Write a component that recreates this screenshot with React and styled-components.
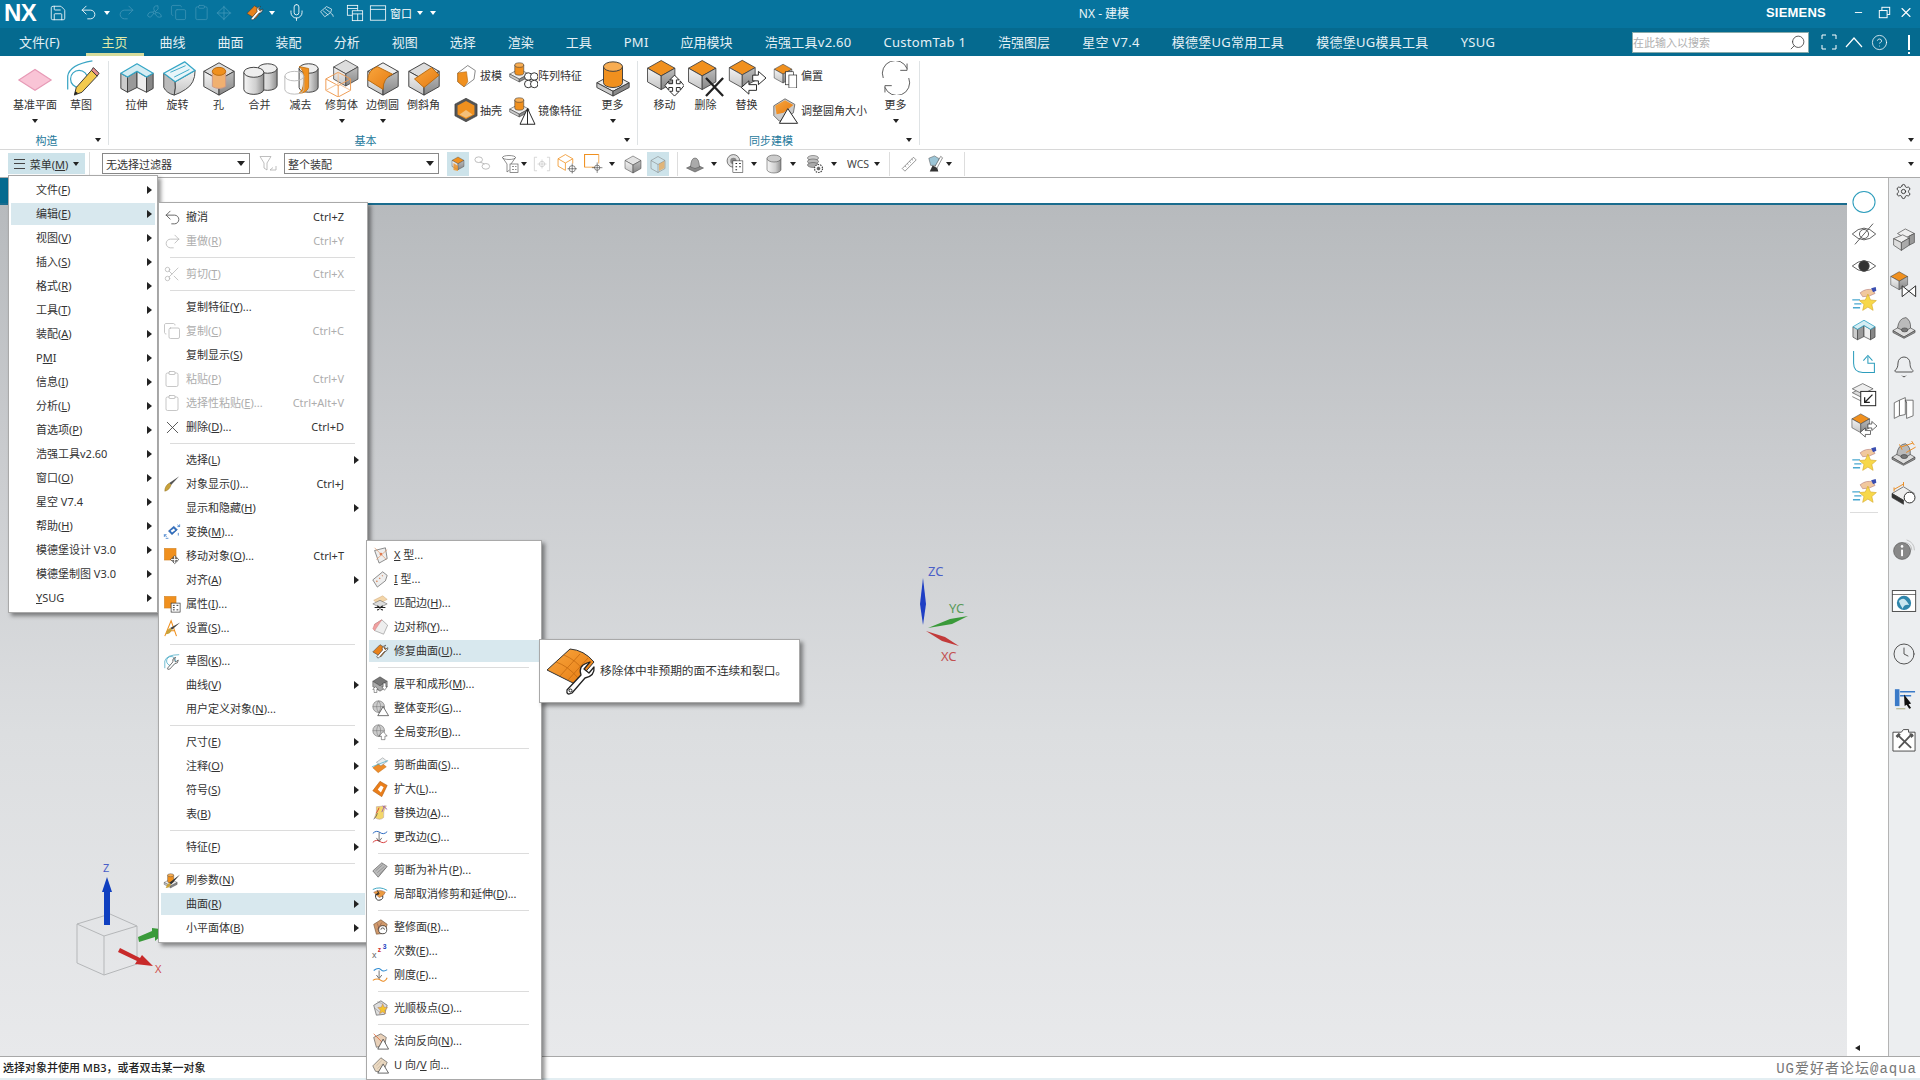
import React from "react";
import styled, { createGlobalStyle } from "styled-components";
import { Save, Undo2, Redo2, Mic, Search, CircleHelp, Scissors, Copy, Clipboard, X, Bell, Settings, Clock, Minus } from "lucide-react";

const Global = createGlobalStyle`
  html, body { margin: 0; padding: 0; background: #fff; }
  body { font-family: "Noto Sans", "Noto Sans CJK SC", sans-serif; font-size: 11px; color: #333; }
  * { box-sizing: border-box; }
`;

/* ---------- page frame ---------- */
const Page = styled.div`position: relative; width: 1920px; height: 1080px; overflow: hidden; display: flex; flex-direction: column; background: #fff;`;
const TitleBar = styled.div`height: 28px; flex: none; background: #06749e; color: #fff; display: flex; align-items: center; position: relative; padding-bottom: 3px;`;
const Logo = styled.div`font: bold 24px/25px "Liberation Sans", sans-serif; width: 36px; padding-left: 4px; flex: none; letter-spacing: -.5px; white-space: nowrap;`;
const Slot = styled.div`flex: none; display: flex; align-items: center; justify-content: center; width: ${p => p.$w}px; margin-left: ${p => p.$ml}px; height: ${p => p.$h || 22}px; background: ${p => p.$on ? "#cde3ea" : "transparent"}; white-space: nowrap;`;
const WinTitle = styled.div`flex: none; width: 100px; margin-left: 617px; text-align: center; font-size: 12px; color: #eaf4f8;`;
const Siemens = styled.div`flex: none; width: 62px; font: bold 13px "Liberation Sans", sans-serif; letter-spacing: .2px;`;
const TabRow = styled.div`height: 28px; flex: none; background: #056a8f; display: flex; align-items: stretch; position: relative;`;
const Tab = styled.div`padding: 2px 16px 0; font-size: 13px; letter-spacing: ${p => p.$ls || 0}px; color: ${p => p.$on ? "#dfe8a8" : "#e4f0f5"}; display: flex; align-items: center; white-space: nowrap; flex: none; margin-left: ${p => p.$ml || 0}px; margin-right: ${p => p.$mr || 0}px; border-bottom: 3px solid ${p => p.$on ? "#d6dc9c" : "transparent"};`;
const TabTools = styled.div`position: absolute; left: 1632px; top: 3px; height: 22px; display: flex; align-items: center; color: #fff;`;
const SearchBox = styled.div`width: 177px; height: 21px; background: #fff; border: 1px solid #8aa; display: flex; align-items: center; justify-content: space-between; padding: 0 2px 0 0; color: #b0b0b0; font-size: 11px; margin-right: 8px;`;
const Mirror = styled.span`display: flex; transform: scaleX(-1); color: #444;`;
const Bang = styled.div`width: 2px; height: 15px; background: #fff; margin-left: 20px; position: relative; &::after { content: ""; position: absolute; left: 0; top: 17px; width: 2px; height: 2px; background: #fff; }`;

const Ribbon = styled.div`height: 94px; flex: none; display: flex; background: #fff; border-bottom: 1px solid #d8d8d8; position: relative;`;
const Group = styled.div`width: ${p => p.$w}px; flex: none; display: flex; flex-direction: column; position: relative; padding-top: 2px; &::after { content: ""; position: absolute; right: 0; top: 5px; bottom: 4px; width: 1px; background: #dfe3e5; }`;
const GroupBody = styled.div`height: 74px; display: flex; padding-left: ${p => p.$pl}px;`;
const GroupFoot = styled.div`height: 16px; display: flex; align-items: center; padding-right: 6px;`;
const GroupName = styled.div`flex: 1; text-align: center; font-size: 11px; color: #1f7a9c;`;
const CaretBox = styled.div`width: 10px; display: flex; justify-content: center;`;
const Big = styled.div`width: ${p => p.$w || 41}px; flex: none; display: flex; flex-direction: column; align-items: center; font-size: 11px; color: #333;`;
const BigIcon = styled.div`height: 39px; display: flex; align-items: center; justify-content: center;`;
const BigText = styled.div`line-height: 16px; white-space: nowrap;`;
const BigDrop = styled.div`height: 14px; display: flex; align-items: center; margin-top: 1px;`;
const SmallCol = styled.div`width: ${p => p.$w}px; flex: none; margin-left: ${p => p.$ml || 0}px; display: flex; flex-direction: column; gap: 5px; padding-top: 2px;`;
const SmallBtn = styled.div`height: 30px; display: flex; align-items: center; font-size: 11px; white-space: nowrap;`;
const SmallIcon = styled.div`width: ${p => p.$w}px; flex: none; display: flex; justify-content: center;`;
const EndCaret = styled.div`position: absolute; right: 6px; top: ${p => p.$t}px;`;

const Toolbar = styled.div`height: 28px; flex: none; display: flex; align-items: center; border-bottom: 1px solid #aaa; background: #fff; position: relative;`;
const MenuBtnInner = styled.div`display: flex; align-items: center; font-size: 11px; gap: 5px; color: #333;`;
const Combo = styled.div`width: 100%; height: 21px; border: 1px solid #888; display: flex; align-items: center; justify-content: space-between; padding: 0 4px 0 3px; font-size: 11px; color: #333; background: #fff;`;
const VLine = styled.div`width: 1px; height: 24px; background: #ddd;`;
const Burger = styled.div`width: 11px; height: 10px; border-top: 1px solid #444; border-bottom: 1px solid #444; position: relative; &::after { content: ""; position: absolute; left: 0; right: 0; top: 3px; height: 1px; background: #444; }`;
const Wcs = styled.span`font-size: 10.5px; color: #444;`;

const Work = styled.div`flex: 1; display: flex; min-height: 0;`;
const ViewCol = styled.div`flex: 1; display: flex; flex-direction: column; min-width: 0;`;
const TabStrip = styled.div`height: 27px; flex: none; background: #fff; border-bottom: 2px solid #1a6c8e; position: relative; &::before { content: ""; position: absolute; left: 0; top: 0; bottom: 0; width: 8px; background: #056a8f; }`;
const Viewport = styled.div`flex: 1; position: relative; background: linear-gradient(180deg, #b7babd 0%, #cacccf 30%, #dcdee0 62%, #e8e9eb 100%);`;
const ResBar = styled.div`width: 41px; flex: none; display: flex; flex-direction: column; align-items: center; padding: 8px 7px 0 0; background: #fff;`;
const ResItem = styled.div`height: 32px; width: 100%; flex: none; display: flex; align-items: center; justify-content: center;`;
const ResLine = styled.div`width: 28px; height: 1px; background: #ddd; margin-top: 6px;`;
const ResCaret = styled.div`margin-top: auto; margin-bottom: 5px; align-self: flex-start; margin-left: 8px; width: 0; height: 0; border: 3.5px solid transparent; border-right: 5px solid #222; border-left: 0;`;
const NavBar = styled.div`width: 32px; flex: none; background: #eceef0; border-left: 1px solid #b4b4b4; display: flex; flex-direction: column; align-items: center; padding-right: 2px;`;
const NavItem = styled.div`flex: none; display: flex; justify-content: center; align-items: center; height: 30px; margin-top: ${p => p.$mt}px;`;

const Status = styled.div`height: 24px; flex: none; border-top: 1px solid #a8a8a8; display: flex; background: #fff; border-bottom: 2px solid #e3eef2; justify-content: space-between; align-items: center; padding: 0 3px 1px;`;
const StatusText = styled.div`font-size: 11px; font-weight: 500; color: #222;`;
const Watermark = styled.div`font: 14px "Liberation Mono", "Noto Sans CJK SC", monospace; color: #777; letter-spacing: 1px;`;

/* ---------- menus ---------- */
const Menu = styled.div`position: absolute; left: ${p => p.$l}px; top: ${p => p.$t}px; width: ${p => p.$w}px; background: #fff; border: 1px solid #a9a9a9; box-shadow: 3px 3px 4px rgba(0,0,0,.42); padding: 2px 0; display: flex; flex-direction: column;`;
const Row = styled.div`height: 22px; flex: none; margin: 1px 2px; display: flex; align-items: center; background: ${p => p.$on ? "#d8e8ee" : "transparent"}; color: ${p => p.$off ? "#adadad" : "#333"}; font-size: 11px; white-space: nowrap;`;
const RowIcon = styled.div`width: 22px; flex: none; display: flex; justify-content: center; align-items: center; color: ${p => p.$off ? "#b4b4b4" : "#444"};`;
const RowText = styled.div`flex: 1; padding: 0 0 2px 3px;`;
const Short = styled.div`margin-right: ${p => p.$mr}px; padding-bottom: 2px;`;
const ArrowBox = styled.div`width: ${p => p.$w}px; flex: none; display: flex;`;
const Tri = styled.div`width: 0; height: 0; border: 4px solid transparent; border-left: 5px solid #222; border-right: 0;`;
const Sep = styled.div`height: 1px; flex: none; background: #dcdcdc; margin: 4px 12px 4px 11px;`;
const Mn = styled.span`text-decoration: underline; text-underline-offset: 1px;`;
const Tip = styled.div`position: absolute; left: 539px; top: 639px; width: 261px; height: 64px; background: #fff; border: 1px solid #a9a9a9; box-shadow: 3px 3px 4px rgba(0,0,0,.42); display: flex; align-items: center; padding-left: 6px; gap: 4px; font-size: 11.7px; color: #333; white-space: nowrap;`;
const TipText = styled.span`padding-bottom: 4px;`;
const Caret = styled.div`width: 0; height: 0; border: ${p => p.$s || 3}px solid transparent; border-top: ${p => (p.$s || 3) + 1}px solid ${p => p.$c || "#222"}; border-bottom: 0;`;

const Svg = styled.svg`display: block; flex: none; width: ${p => p.$s}px; height: ${p => p.$s}px;`;
const Defs = styled.svg`position: absolute; width: 0; height: 0;`;
const Overlay = styled.svg`position: absolute; left: ${p => p.$l}px; top: ${p => p.$t}px; overflow: visible;`;

/* ---------- drawing parts ---------- */
const O = "#f0901e";
const Cube = ({ top = O, t = "" }) => (
  <g transform={t} stroke="#3d3d3d" strokeWidth="1" strokeLinejoin="round">
    <path d="M20 4 36 13 20 22 4 13Z" fill={top} />
    <path d="M4 13 20 22V38L4 29Z" fill="url(#gl)" />
    <path d="M36 13 20 22V38L36 29Z" fill="url(#gr)" />
  </g>
);
const Cyl = ({ x, y, w, h, fill = "url(#cy)", top = "#eee" }) => (
  <g stroke="#3d3d3d">
    <path d={`M${x} ${y}V${y + h}A${w / 2} ${w / 4} 0 0 0 ${x + w} ${y + h}V${y}Z`} fill={fill} />
    <ellipse cx={x + w / 2} cy={y} rx={w / 2} ry={w / 4} fill={top} />
  </g>
);
const Base = () => (
  <g stroke="#3d3d3d" strokeLinejoin="round">
    <path d="M20 16 37 25 20 34 3 25Z" fill="#eee" />
    <path d="M3 25 20 34V39L3 30Z" fill="#ccc" />
    <path d="M37 25 20 34V39L37 30Z" fill="#888" />
  </g>
);
const Wrench = ({ t }) => <path transform={t} d="M10 36 24 20Q21 12 29 9L32 8 27 14 31 19 37 14Q38 22 28 24L15 39Q11 41 10 36Z" fill="#fff" stroke="#222" strokeWidth="1.4" strokeLinejoin="round" />;
const Star = () => <path d="M26 14 30 23 39 24 32 30 34 39 26 34 18 39 20 30 13 24 22 23Z" fill="#f7d84a" stroke="#d9ab2e" />;
const Move = () => <path d="M30 17 35 22H32V26H36V23L40 28 36 33V30H32V34H35L30 39 25 34H28V30H24V33L20 28 24 23V26H28V22H25Z" fill="#fff" stroke="#222" strokeLinejoin="round" />;
const XMark = () => <path d="M20 20 38 39M38 20 20 39" stroke="#222" strokeWidth="2.4" />;
const Swap = () => <g fill="#fff" stroke="#222" strokeLinejoin="round"><path d="M26 17H32V13L40 20 32 27V23H26Z" /><path d="M30 27H22V23L14 30 22 37V33H30Z" /></g>;
const Plate = ({ children, bg = O, stroke = "#c87818" }) => <g><rect x="3" y="3" width="26" height="26" fill={bg} stroke={stroke} />{children}</g>;
const Bowl = () => <g stroke="#444" strokeLinejoin="round"><path d="M3 27 20 17 37 27 20 37Z" fill="#ddd" /><path d="M3 27V30L20 39 37 30V27L20 37Z" fill="#999" /><path d="M10 23Q12 8 23 7 31 12 30 23Q22 30 10 23Z" fill="#bbb" /><ellipse cx="21" cy="26" rx="5" ry="3" fill="#777" /></g>;
const Hand = () => <g><path d="M2 23H14M5 29H16M3 35H14" stroke="#4aa8d0" strokeWidth="2" /><path d="M14 12Q24 4 34 8L37 13 28 17 18 18Z" fill="#f1c89e" stroke="#b88" /><path d="M31 5 38 3 39 9 34 11Z" fill="#3a4eb0" /><Star /></g>;
const GlobeTri = ({ up }) => <g><circle cx="17" cy="17" r="13" fill="#ccc" stroke="#444" /><path d="M4 17H30M17 4Q8 17 17 30M17 4Q26 17 17 30" fill="none" stroke="#666" />{up ? <path d="M27 19 36 29H31V37H23V29H18Z" fill="#fff" stroke="#222" /> : <path d="M27 17 39 37H15Z" fill="#fff" stroke="#222" strokeWidth="1.4" />}</g>;

const G = {
  plane: <path d="M3 22 20 11 37 22 20 33Z" fill="#f9c4d6" stroke="#e79ab6" strokeWidth="1.2" />,
  sketch: <g fill="none"><path d="M6 32V18Q8 6 32 2" stroke="#3aa5c4" strokeWidth="1.3" /><circle cx="18" cy="21" r="9" stroke="#3aa5c4" strokeWidth="1.3" /><path d="M13 38 15 30 31 12 37 18 21 35Z" fill="#f3ca4e" stroke="#333" /><path d="M31 12 33 9 39 15 37 18Z" fill="#e9908e" stroke="#333" /><path d="M13 38 14 34 17 36Z" fill="#222" /></g>,
  extrude: <g stroke="#3d3d3d" strokeLinejoin="round"><path d="M3 15V31L10 35V19Z" fill="#ccc" /><path d="M10 19 20 13V30L10 35Z" fill="#999" /><path d="M20 13 30 19V35L20 30Z" fill="#eee" /><path d="M30 19 37 15V31L30 35Z" fill="#888" /><path d="M3 15 20 5 37 15 30 19 20 13 10 19Z" fill="#d6edf3" stroke="#35a6c6" strokeWidth="1.3" /></g>,
  revolve: <g strokeLinejoin="round"><path d="M5 15 17 24Q18 30 16 38 8 36 5 30Z" fill="#bbb" stroke="#444" /><path d="M17 24 38 12Q38 26 28 32 22 36 16 38 18 30 17 24Z" fill="url(#gl)" stroke="#444" /><path d="M5 15 27 3 38 12 17 24Z" fill="#e8f5f9" stroke="#35a6c6" strokeWidth="1.3" /><path d="M12 14 28 7M16 19 32 11" stroke="#35a6c6" /></g>,
  hole: <g><Cube top="#ddd" /><path d="M13 13V29Q20 33 27 29V13Z" fill="#f0b070" stroke="#c98" /><ellipse cx="20" cy="13" rx="7" ry="4.2" fill={O} stroke="#b86a10" /></g>,
  unite: <g><Cyl x={18} y={10} w={20} h={18} /><Cyl x={3} y={14} w={21} h={18} /></g>,
  subtract: <g><Cyl x={18} y={10} w={20} h={20} /><path d="M18 8Q24 12 23 24 22 34 18 36 26 36 28 30V10Z" fill={O} stroke="#c87818" /><path d="M3 18V32A10 5 0 0 0 23 32V18A10 5 0 0 0 3 18ZM3 18A10 5 0 0 0 23 18" fill="none" stroke="#bbb" /></g>,
  trim: <g><g transform="translate(8 -2) scale(.8)"><Cube top="#ddd" /></g><g fill="none" stroke="#ee9a50"><path d="M3 21 16 14 29 21 16 28ZM3 21V33L16 40V28M29 21V33L16 40" /><path d="M16 14V26L3 33M16 26 29 33" stroke="#f3c090" /></g></g>,
  blend: <g><Cube top="#eee" /><path d="M4 22Q4 12 14 8L30 16Q20 20 20 32Z" fill="url(#og)" stroke="#b86a10" /></g>,
  chamfer: <g><Cube top="#ddd" /><path d="M10 21 28 9 36 17 20 30Z" fill="url(#og)" stroke="#b86a10" /></g>,
  more: <g><Base /><Cyl x={10} y={8} w={20} h={17} fill={O} top="#f8ad52" /></g>,
  move: <g><Cube t="translate(-2 -2) scale(.9)" /><Move /></g>,
  del: <g><Cube t="translate(-2 -2) scale(.9)" /><XMark /></g>,
  replace: <g><Cube t="translate(-2 -2) scale(.85)" /><Swap /></g>,
  refresh: <g fill="none" stroke="#555" strokeWidth="1.1"><path d="M33 9A15 15 0 0 0 5 20" /><path d="M33 3V11H25" /><path d="M7 31A15 15 0 0 0 35 20" /><path d="M7 37V29H15" /></g>,
  draft: <g><path d="M6 16 22 4 34 12 32 26 16 38 6 30Z" fill="#fff" stroke="#444" /><path d="M6 16 20 14 22 30 16 38 6 30Z" fill={O} stroke="#b86a10" /></g>,
  shell: <g><path d="M20 2 37 11V29L20 38 3 29V11Z" fill="#555" stroke="#333" /><path d="M20 6 33 13V27L20 34 7 27V13Z" fill={O} /><path d="M10 27 20 20 30 27 20 32Z" fill="#f5c07a" /></g>,
  pattern: <g><g transform="scale(.75)"><Base /><Cyl x={12} y={9} w={16} h={14} fill={O} top="#f8ad52" /></g><g fill="#fff" stroke="#222" strokeWidth="1.2"><circle cx="27" cy="22" r="5" /><circle cx="35" cy="22" r="5" /><circle cx="27" cy="32" r="5" /><circle cx="35" cy="32" r="5" /></g></g>,
  mirror: <g><g transform="scale(.75)"><Base /><Cyl x={12} y={9} w={16} h={14} fill={O} top="#f8ad52" /></g><path d="M26 18 16 39H36ZM26 18V39" fill="#fff" stroke="#222" strokeWidth="1.3" /></g>,
  offset: <g><Cube t="scale(.85)" /><rect x="21" y="15" width="12" height="20" fill="#fff" stroke="#222" /><rect x="26" y="20" width="12" height="20" fill="#fff" stroke="#222" /></g>,
  resize: <g><path d="M4 14 20 4 34 12 32 24 12 36 4 28Z" fill="#ccc" stroke="#444" /><path d="M6 14 20 6 32 13 18 24 8 26Z" fill="url(#og)" /><path d="M24 18 12 39H38Z" fill="#fff" stroke="#222" strokeWidth="1.4" /></g>,
  filterBack: <g fill="none" stroke="#aaa" strokeWidth="1.5"><path d="M4 5H26L18 18V32L12 28V18Z" /><path d="M24 32 30 27M24 32H36V24" /></g>,
  sel: <g><Cube t="translate(5 3) scale(.75)" /><path d="M11 18V32L20 34V24Z" fill={O} opacity=".8" /></g>,
  link: <g fill="none" stroke="#aaa" strokeWidth="1.6"><ellipse cx="12" cy="12" rx="8" ry="6" /><ellipse cx="27" cy="26" rx="8" ry="6" /><path d="M15 17 24 21" /></g>,
  fstack: <g fill="none" stroke="#555" strokeWidth="1.3"><ellipse cx="18" cy="7" rx="13" ry="4" /><path d="M5 7 14 20V36L19 32M31 7 22 20" /><rect x="20" y="20" width="16" height="17" fill="#fff" /><path d="M24 25H28M30 25H33M24 31H28M30 31H33" /></g>,
  bracket: <g fill="none" stroke="#c8c8c8" strokeWidth="1.6"><path d="M9 5H3V35H9M31 5H37V35H31" /><circle cx="20" cy="20" r="6" /><path d="M20 10V30M10 20H30" /></g>,
  cubePlus: <g><g fill="none" stroke={O} strokeWidth="1.5"><path d="M16 3 30 11 16 19 2 11ZM2 11V25L16 33V19M30 11V20" /></g><circle cx="29" cy="30" r="6" fill="#fff" stroke="#222" /><path d="M29 20V39M20 30H38" stroke="#222" /></g>,
  squarePlus: <g><path d="M3 27V3H30" fill="none" stroke={O} strokeWidth="2" /><path d="M3 27H24M30 3V20" stroke={O} strokeWidth="1.4" /><circle cx="27" cy="28" r="5" fill="#fff" stroke="#222" /><path d="M27 18V38M17 28H37" stroke="#222" /></g>,
  grayCube: <Cube top="#e4e4e4" />,
  wire: <g><g fill="none" stroke="#777"><path d="M20 5 34 13V29L20 37 6 29V13ZM6 13 20 21 34 13M20 21V37" /></g><path d="M22 20 33 14V28L22 34Z" fill={O} opacity=".55" /></g>,
  gbowl: <g stroke="#444"><path d="M3 28 20 20 37 28 20 36Z" fill="#888" /><path d="M11 26Q12 8 20 8 28 8 29 26Q20 32 11 26Z" fill="#aaa" /></g>,
  rgrid: <g><circle cx="16" cy="15" r="12" fill="#ddd" stroke="#444" strokeWidth="1.3" /><circle cx="16" cy="15" r="6" fill="#888" /><rect x="15" y="15" width="19" height="22" fill="#fff" stroke="#222" /><path d="M20 20H23M27 20H30M20 26H23M27 26H30M20 32H23" stroke="#222" strokeWidth="2" /></g>,
  gcyl: <Cyl x={6} y={9} w={28} h={22} fill="url(#cy)" top="#ccc" />,
  gearStack: <g stroke="#444"><ellipse cx="16" cy="8" rx="11" ry="5" fill="#ccc" /><ellipse cx="16" cy="15" rx="11" ry="5" fill="#bbb" /><ellipse cx="16" cy="22" rx="11" ry="5" fill="#aaa" /><circle cx="27" cy="29" r="8" fill="#fff" strokeWidth="2.4" strokeDasharray="3 2" /><circle cx="27" cy="29" r="3" fill="#666" /></g>,
  ruler: <g fill="#fff" stroke="#444" strokeWidth="1.2"><path d="M5 30 30 5 36 11 11 36Z" /><path d="M11 24 14 27M16 19 19 22M21 14 24 17M26 9 29 12" /></g>,
  paint: <g><path d="M8 9 20 4 30 10 26 24 12 24Z" fill="#9cc5d6" stroke="#444" /><path d="M20 28 33 5 37 8 25 30Z" fill="#fff" stroke="#222" /><path d="M10 37 16 24 26 30 28 37Z" fill="#333" /></g>,
  repair: <g><path d="M4 22 20 6 36 16 22 33Z" fill="#e8821c" stroke="#3a3a3a" strokeWidth="1.2" /><Wrench t="translate(4 0) scale(.9)" /></g>,
  tool: <g fill="none" stroke="#fff" strokeWidth="1.6"><path d="M6 18 20 6 32 12 30 20 16 30Z" /><path d="M12 16 24 26M17 11 29 20" /><path d="M30 22Q36 24 36 30" /></g>,
  win1: <g fill="none" stroke="#fff" strokeWidth="1.8"><rect x="3" y="3" width="23" height="22" /><path d="M3 10H26" /><rect x="14" y="15" width="23" height="22" fill="#06749e" /><path d="M14 22H37M26 22V37" /></g>,
  restore: <g fill="none" stroke="#fff" strokeWidth="3"><rect x="12" y="4" width="24" height="22" /><rect x="4" y="14" width="24" height="22" fill="#06749e" /></g>,
  win2: <g fill="none" stroke="#fff" strokeWidth="1.8"><rect x="3" y="4" width="34" height="32" /><path d="M3 12H37" /></g>,
  fan: <g fill="none" stroke="#4a9cbc" strokeWidth="1.6"><circle cx="20" cy="20" r="3" /><path d="M20 17Q14 4 28 4 32 12 22 18M23 20Q36 20 36 30 26 34 22 23M18 22Q10 36 4 28 4 18 17 19" /></g>,
  pasteX: <g fill="none" stroke="#4a9cbc" strokeWidth="1.6"><path d="M5 20 20 6 34 20 20 34Z" /><path d="M20 4V36M4 20H36" /></g>,
  brush: <g><path d="M36 3 18 22 14 18Z" fill="#555" /><path d="M14 18 18 22Q14 34 4 36 4 24 14 18Z" fill="#c9a23a" stroke="#8a6a18" /></g>,
  transform: <g><path d="M12 18 24 7 32 15 20 26Z" fill="#2f6fc0" stroke="#1a4a90" /><path d="M17 17 24 12 27 16 20 21Z" fill="#fff" /><path d="M3 26 8 31M3 26V31M3 26H8M37 8 32 4M37 8V3M37 8H32M6 34H12M34 22V28" stroke="#3a7ac8" strokeWidth="1.8" fill="none" /></g>,
  moveObj: <g><Plate /><path d="M26 19 30 23H28V26H31V24L35 28 31 32V30H28V33H30L26 37 22 33H24V30H21V32L17 28 21 24V26H24V23H22Z" fill="#fff" stroke="#222" strokeWidth="1.4" /></g>,
  attr: <g><Plate /><rect x="18" y="18" width="20" height="20" fill="#fff" stroke="#222" strokeWidth="1.4" /><path d="M22 23H26M30 23H34M22 28H26M30 33H34M22 33H26" stroke="#222" strokeWidth="2" /></g>,
  settings: <g><path d="M4 38 18 4 30 38M9 26H26" fill="none" stroke={O} strokeWidth="2.4" /><path d="M38 8 20 24 16 20Z" fill="#444" /><path d="M16 20 20 24Q16 34 6 34 8 24 16 20Z" fill="#c9a23a" /></g>,
  sketchW: <g fill="none" stroke="#2d9dbc" strokeWidth="1.5"><path d="M4 36V20Q8 6 36 6" /><circle cx="18" cy="20" r="10" /><path d="M10 36 22 22Q20 14 28 12L24 18 28 22 34 18Q34 26 26 26L15 38Q9 40 10 36Z" fill="#fff" stroke="#333" /></g>,
  param: <g><g transform="scale(.85) translate(0 5)"><Base /><Cyl x={12} y={6} w={16} h={16} fill={O} top="#f8ad52" /></g><path d="M38 8 18 30 14 26Z" fill="#333" /><path d="M14 26 18 30Q14 38 6 38 8 30 14 26Z" fill="#c9a23a" /></g>,
  xtype: <g><path d="M8 10 32 4 36 28 18 38Z" fill="#eee" stroke="#444" strokeWidth="1.3" /><path d="M8 4 34 30M36 8 12 30" stroke="#e09060" strokeWidth="1.5" /><circle cx="22" cy="18" r="3" fill="#e07a50" /></g>,
  itype: <g><path d="M4 22 26 4 36 12 32 24 14 38Z" fill="#eee" stroke="#444" strokeWidth="1.3" /><path d="M12 26 26 12" stroke="#d88050" strokeWidth="3" strokeDasharray="3 6" /></g>,
  match: <g><path d="M6 14 26 4 36 12 16 22Z" fill="#f3d5a8" stroke="#c9a070" /><path d="M4 22 20 14 36 22 20 30Z" fill="#ddd" stroke="#444" /><path d="M8 30H32M14 26 26 36M26 26 14 36" stroke="#222" strokeWidth="2.5" /></g>,
  edgeSym: <g><path d="M8 14 24 4 37 16 28 36 8 28Z" fill="#eee" stroke="#666" /><path d="M24 4 8 14 4 24 8 28Z" fill="#f0a0a0" stroke="#c77" /></g>,
  flatten: <g><path d="M4 14 20 4 36 14 20 24Z" fill="#777" stroke="#333" /><path d="M4 14V26L20 36 36 26V14L20 24Z" fill="#aaa" stroke="#333" /><path d="M10 26 16 32H13V39H7V32H4Z" fill="#fff" stroke="#222" /><path d="M30 34 36 26H33V18H27V26H24Z" fill="#fff" stroke="#222" /></g>,
  glob1: <GlobeTri />,
  glob2: <GlobeTri up />,
  trimSurf: <g><path d="M4 26 22 14 34 24 16 37Z" fill="#ee8c2a" stroke="#b86a10" /><path d="M12 14 26 4 36 12 22 22Z" fill="#e8eef0" stroke="#777" /><path d="M2 24 38 10" stroke="#3aa5c4" strokeWidth="1.5" /></g>,
  enlarge: <g><path d="M4 24 20 3 36 12 24 37Z" fill="#ea7e1a" stroke="#a85a10" strokeWidth="1.2" /><path d="M15 21 22 12 28 16 22 28Z" fill="#fff" /></g>,
  repEdge: <g><path d="M8 30Q14 18 12 6L34 4Q26 16 28 30 20 38 8 30Z" fill="#f3d76a" stroke="#a88" /><path d="M12 20Q16 14 18 8" stroke="#e04040" strokeWidth="2" /><path d="M26 4 36 12M30 4 24 18" stroke="#9a60b0" strokeWidth="2" /><path d="M6 34Q14 26 14 20" stroke="#444" strokeWidth="1.5" fill="none" /></g>,
  chgEdge: <g fill="none" strokeWidth="2.2"><path d="M4 12Q12 4 20 10T36 8" stroke="#2d6ac0" /><path d="M4 32Q12 24 20 30T36 28" stroke="#d84040" /><path d="M18 10V28M12 22 18 30 24 22" stroke="#333" strokeWidth="1.5" /></g>,
  trimPatch: <g><path d="M4 22 24 4 36 12 16 36Z" fill="#bbb" stroke="#444" strokeWidth="1.3" /><path d="M10 22 26 8M14 26 30 12M18 30 32 16" stroke="#666" /></g>,
  localUn: <g><path d="M4 10Q20 2 36 12" fill="none" stroke="#2d9dbc" strokeWidth="2" /><path d="M6 16Q20 8 32 16 28 26 18 28Z" fill="#ea9a40" stroke="#855" /><path d="M26 24A8 8 0 1 1 16 18M14 12 18 20 10 22" fill="none" stroke="#222" strokeWidth="2" /></g>,
  refit: <g><path d="M6 14 22 4 36 14 30 34 12 36Z" fill="#d09a6c" stroke="#6a4a30" strokeWidth="1.3" /><path d="M14 12 20 30M24 10 14 26" stroke="#744" /><circle cx="26" cy="26" r="9" fill="#fff" stroke="#222" strokeWidth="1.6" /><path d="M22 26A4 4 0 0 1 30 26" fill="none" stroke="#222" strokeWidth="1.6" /></g>,
  degree: <g fontFamily="Liberation Sans, sans-serif"><text x="2" y="36" fontSize="20" fill="#666">x</text><text x="15" y="22" fontSize="15" fontWeight="bold" fill="#d03030">z</text><text x="26" y="15" fontSize="15" fontWeight="bold" fill="#2040c0">3</text></g>,
  stiff: <g fill="none" strokeWidth="2.4"><path d="M6 10Q16 2 22 8T36 8" stroke="#2d8ad0" /><path d="M4 32Q14 26 22 32T36 26" stroke="#ea8a20" /><path d="M18 10V26M12 20 18 28 24 20" stroke="#333" strokeWidth="1.5" /></g>,
  smooth: <g><path d="M6 14 22 4 36 14 30 34 12 36Z" fill="#ddd" stroke="#444" strokeWidth="1.3" /><path d="M24 10 14 6M8 20 20 30" stroke="#777" /><path d="M26 10 29 18 37 19 31 25 33 33 26 29 19 33 21 25 15 19 23 18Z" fill="#f4c430" stroke="#a77" /></g>,
  normal: <g><path d="M6 12 22 4 34 12 30 30 12 34Z" fill="#e8d0b8" stroke="#444" strokeWidth="1.3" /><path d="M6 4 30 28" stroke="#e07040" strokeWidth="2" /><path d="M27 16 15 38H39Z" fill="#fff" stroke="#222" strokeWidth="1.5" /></g>,
  uv: <g><path d="M4 22 22 4 36 14 26 36 10 34Z" fill="#ead8c0" stroke="#444" strokeWidth="1.3" /><path d="M12 22 24 10M14 28 30 14" stroke="#b0a090" /><path d="M27 18 15 38H39Z" fill="#fff" stroke="#222" strokeWidth="1.5" /></g>,
  /* side bars */
  ring: <ellipse cx="20" cy="20" rx="17" ry="16" fill="#fff" stroke="#2d9dbc" strokeWidth="1.6" />,
  hide: <g fill="none" stroke="#444" strokeWidth="1.3"><path d="M2 20Q20 2 38 20 20 38 2 20Z" /><circle cx="20" cy="20" r="7" /><path d="M6 36 34 4" /></g>,
  show: <g stroke="#444" strokeWidth="1.3"><path d="M2 20Q20 4 38 20 20 36 2 20Z" fill="#fff" /><circle cx="20" cy="20" r="8" fill="#333" /></g>,
  hand: <Hand />,
  curveL: <g fill="none" stroke="#2d9dbc" strokeWidth="1.6"><path d="M4 3V22Q4 36 18 36H36V22H26V12" /><path d="M19 18 26 10 33 18" /></g>,
  layers: <g><path d="M18 26 2 18 18 10 34 18Z" fill="#ddd" stroke="#444" /><path d="M18 20 2 12 18 4 34 12Z" fill="#eee" stroke="#444" /><path d="M2 24 18 32 22 30" fill="none" stroke="#444" /><rect x="15" y="16" width="23" height="22" fill="#fff" stroke="#222" strokeWidth="1.5" /><path d="M33 21 21 33M21 25V33H29" fill="none" stroke="#222" strokeWidth="2" /></g>,
  cubeSwap: <g><Cube t="translate(-2 -2) scale(.85)" /><Swap /></g>,
  stack: <g stroke="#444" strokeLinejoin="round"><path d="M22 3 36 10 22 17 10 10Z" fill="#eee" /><path d="M36 10V24L28 28V14Z" fill="#999" /><path d="M4 18 18 12 28 17 16 24Z" fill="#eee" /><path d="M4 18V28L16 36V24Z" fill="#ddd" /><path d="M16 24 28 17V28L16 36Z" fill="#aaa" /></g>,
  bow: <g><Cube t="translate(-2 -2) scale(.78)" /><path d="M18 22V38L38 22V38Z" fill="#fff" stroke="#222" strokeWidth="1.4" /></g>,
  bowl: <Bowl />,
  books: <g fill="#fff" stroke="#555" strokeWidth="1.2"><path d="M5 12 13 8V32L5 36Z" /><path d="M13 8 22 4V30L13 32Z" /><path d="M22 8H34V32L24 36V12Z" /><path d="M22 8 24 12" /></g>,
  bowlDim: <g><Bowl /><path d="M16 12 34 6M14 8 18 16M32 3 36 9M24 20 38 12" stroke="#ea8a20" strokeWidth="1.4" fill="none" /></g>,
  boxLens: <g><path d="M3 20 20 10 36 20 20 30Z" fill="#eee" stroke="#444" /><path d="M3 20V26L20 36V30Z" fill="#333" stroke="#333" /><path d="M6 14 20 6M6 11V17M20 3V9" stroke="#ea8a20" strokeWidth="1.4" /><circle cx="29" cy="26" r="8" fill="#fff" stroke="#222" strokeWidth="1.4" /></g>,
  info: <g><circle cx="17" cy="23" r="13" fill="#888" stroke="#555" /><circle cx="17" cy="16" r="2" fill="#fff" /><path d="M17 21V31" stroke="#fff" strokeWidth="3" /><path d="M24 6Q36 10 36 22M22 10Q32 12 32 22" fill="none" stroke="#aaa" /></g>,
  browser: <g><rect x="2" y="4" width="36" height="32" fill="#fff" stroke="#333" strokeWidth="1.3" /><path d="M2 10H38" stroke="#333" /><circle cx="20" cy="23" r="11" fill="#2f86ac" /><path d="M12 20Q18 14 22 18T28 26Q20 24 18 32 14 26 12 20Z" fill="#c9e6f0" /></g>,
  chart: <g><path d="M6 8H13V34H6Z" fill="#3a7ac8" /><path d="M14 12H37M14 18H31" stroke="#3a7ac8" strokeWidth="2.5" /><path d="M8 38H22" stroke="#bb9" strokeWidth="2" /><path d="M20 16 31 30 27 31 31 37 28 38 24 32 21 34Z" fill="#111" /></g>,
  tools: <g><path d="M3 8H16L19 4H27V8H37V37H3Z" fill="#fff" stroke="#333" strokeWidth="1.3" /><path d="M11 13 31 32M30 13 12 32" stroke="#555" strokeWidth="2.8" /><path d="M7 14 12 9 15 12 10 17ZM28 10Q34 8 35 14L31 17Z" fill="#555" /></g>,
};

const Ico = ({ n, s = 18 }) => <Svg $s={s} viewBox="0 0 40 40">{G[n]}</Svg>;

const Lab = ({ t }) => {
  const parts = t.split("_");
  return <>{parts[0]}{parts.slice(1).map((p, i) => <React.Fragment key={i}><Mn>{p[0]}</Mn>{p.slice(1)}</React.Fragment>)}</>;
};

const place = (items, start = 0) => {
  let end = start;
  return items.map((it) => { const ml = it.c - it.w / 2 - end; end = it.c + it.w / 2; return { ...it, ml }; });
};
const Placed = ({ items, start }) => place(items, start).map((it, i) => <Slot key={i} $w={it.w} $ml={it.ml} $on={it.on} $h={it.h}>{it.el}</Slot>);

const thin = { strokeWidth: 1.1 };
const dim = "#3f94b6";
const titleItems = [
  { c: 58, w: 20, el: <Save size={18} color="#fff" {...thin} /> },
  { c: 88, w: 20, el: <Undo2 size={19} color="#fff" {...thin} /> },
  { c: 107, w: 8, el: <Caret $c="#fff" /> },
  { c: 126, w: 20, el: <Redo2 size={19} color={dim} {...thin} /> },
  { c: 154, w: 20, el: <Ico n="fan" s={17} /> },
  { c: 178, w: 20, el: <Copy size={17} color={dim} {...thin} /> },
  { c: 201, w: 20, el: <Clipboard size={17} color={dim} {...thin} /> },
  { c: 224, w: 20, el: <Ico n="pasteX" s={18} /> },
  { c: 254, w: 20, el: <Ico n="repair" s={19} /> },
  { c: 272, w: 8, el: <Caret $c="#fff" /> },
  { c: 296, w: 20, el: <Mic size={19} color="#fff" {...thin} /> },
  { c: 326, w: 20, el: <Ico n="tool" s={17} /> },
  { c: 355, w: 20, el: <Ico n="win1" s={18} /> },
  { c: 378, w: 18, el: <Ico n="win2" s={18} /> },
  { c: 401, w: 24, el: <span>窗口</span> },
  { c: 420, w: 8, el: <Caret $c="#fff" /> },
  { c: 433, w: 8, el: <Caret $c="#fff" /> },
];

const tabs = ["曲线", "曲面", "装配", "分析", "视图", "选择", "渲染", "工具", "PMI", "应用模块", "浩强工具v2.60", "CustomTab 1", "浩强图层", "星空 V7.4", "模德堡UG常用工具", "模德堡UG模具工具", "YSUG"];

const BigBtn = ({ n, t, drop, w, s = 38 }) => (
  <Big $w={w}>
    <BigIcon><Ico n={n} s={s} /></BigIcon>
    <BigText>{t}</BigText>
    {drop && <BigDrop><Caret /></BigDrop>}
  </Big>
);
const Small = ({ n, t, w, s = 28 }) => (
  <SmallBtn><SmallIcon $w={w}><Ico n={n} s={s} /></SmallIcon>{t}</SmallBtn>
);

const toolItems = [
  { c: 46.5, w: 77, h: 21, on: true, el: <MenuBtnInner><Burger /><span>菜单(<Mn>M</Mn>)</span><Caret /></MenuBtnInner> },
  { c: 89, w: 1, h: 24, el: <VLine /> },
  { c: 176, w: 148, el: <Combo>无选择过滤器<Caret $s={4} /></Combo> },
  { c: 268, w: 22, el: <Ico n="filterBack" s={20} /> },
  { c: 361.5, w: 155, el: <Combo>整个装配<Caret $s={4} /></Combo> },
  { c: 458, w: 22, h: 24, on: true, el: <Ico n="sel" s={20} /> },
  { c: 482, w: 22, el: <Ico n="link" s={19} /> },
  { c: 510, w: 22, el: <Ico n="fstack" s={20} /> },
  { c: 524, w: 6, el: <Caret /> },
  { c: 542, w: 20, el: <Ico n="bracket" s={18} /> },
  { c: 567, w: 22, el: <Ico n="cubePlus" s={21} /> },
  { c: 593, w: 22, el: <Ico n="squarePlus" s={21} /> },
  { c: 612, w: 6, el: <Caret /> },
  { c: 633, w: 22, el: <Ico n="grayCube" s={20} /> },
  { c: 658, w: 22, h: 24, on: true, el: <Ico n="wire" s={20} /> },
  { c: 677.5, w: 1, h: 24, el: <VLine /> },
  { c: 695, w: 22, el: <Ico n="gbowl" s={20} /> },
  { c: 714, w: 6, el: <Caret /> },
  { c: 735, w: 22, el: <Ico n="rgrid" s={21} /> },
  { c: 754, w: 6, el: <Caret /> },
  { c: 774, w: 22, el: <Ico n="gcyl" s={20} /> },
  { c: 793, w: 6, el: <Caret /> },
  { c: 815, w: 22, el: <Ico n="gearStack" s={20} /> },
  { c: 834, w: 6, el: <Caret /> },
  { c: 858, w: 24, el: <Wcs>WCS</Wcs> },
  { c: 877, w: 6, el: <Caret /> },
  { c: 889, w: 1, h: 24, el: <VLine /> },
  { c: 909, w: 22, el: <Ico n="ruler" s={18} /> },
  { c: 934, w: 22, el: <Ico n="paint" s={19} /> },
  { c: 949, w: 6, el: <Caret /> },
  { c: 964.5, w: 1, h: 24, el: <VLine /> },
];

const mainItems = ["文件(_F)", "编辑(_E)", "视图(_V)", "插入(_S)", "格式(_R)", "工具(_T)", "装配(_A)", "P_MI", "信息(_I)", "分析(_L)", "首选项(_P)", "浩强工具v2.60", "窗口(_O)", "星空 V7.4", "帮助(_H)", "模德堡设计 V3.0", "模德堡制图 V3.0", "_YSUG"];

const off = { off: true };
const L = (size, C) => <C size={size} strokeWidth={1} />;
const editItems = [
  { t: "撤消", s: "Ctrl+Z", i: L(19, Undo2) }, { t: "重做(_R)", s: "Ctrl+Y", i: L(19, Redo2), ...off }, "-",
  { t: "剪切(_T)", s: "Ctrl+X", i: L(18, Scissors), ...off }, "-",
  { t: "复制特征(_Y)..." }, { t: "复制(_C)", s: "Ctrl+C", i: L(18, Copy), ...off }, { t: "复制显示(_S)" },
  { t: "粘贴(_P)", s: "Ctrl+V", i: L(18, Clipboard), ...off }, { t: "选择性粘贴(_E)...", s: "Ctrl+Alt+V", i: L(18, Clipboard), ...off },
  { t: "删除(_D)...", s: "Ctrl+D", i: L(21, X) }, "-",
  { t: "选择(_L)", a: 1 }, { t: "对象显示(_J)...", s: "Ctrl+J", n: "brush" }, { t: "显示和隐藏(_H)", a: 1 },
  { t: "变换(_M)...", n: "transform" }, { t: "移动对象(_O)...", s: "Ctrl+T", n: "moveObj" }, { t: "对齐(_A)", a: 1 },
  { t: "属性(_I)...", n: "attr" }, { t: "设置(_S)...", n: "settings" }, "-",
  { t: "草图(_K)...", n: "sketchW" }, { t: "曲线(_V)", a: 1 }, { t: "用户定义对象(_N)..." }, "-",
  { t: "尺寸(_E)", a: 1 }, { t: "注释(_O)", a: 1 }, { t: "符号(_S)", a: 1 }, { t: "表(_B)", a: 1 }, "-",
  { t: "特征(_F)", a: 1 }, "-",
  { t: "刷参数(_N)", n: "param" }, { t: "曲面(_R)", a: 1, on: 1 }, { t: "小平面体(_B)", a: 1 },
];
const surfItems = [
  { t: "_X 型...", n: "xtype" }, { t: "_I 型...", n: "itype" }, { t: "匹配边(_H)...", n: "match" }, { t: "边对称(_Y)...", n: "edgeSym" }, { t: "修复曲面(_U)...", n: "repair", on: 1 }, "-",
  { t: "展平和成形(_M)...", n: "flatten" }, { t: "整体变形(_G)...", n: "glob1" }, { t: "全局变形(_B)...", n: "glob2" }, "-",
  { t: "剪断曲面(_S)...", n: "trimSurf" }, { t: "扩大(_L)...", n: "enlarge" }, { t: "替换边(_A)...", n: "repEdge" }, { t: "更改边(_C)...", n: "chgEdge" }, "-",
  { t: "剪断为补片(_P)...", n: "trimPatch" }, { t: "局部取消修剪和延伸(_D)...", n: "localUn" }, "-",
  { t: "整修面(_R)...", n: "refit" }, { t: "次数(_E)...", n: "degree" }, { t: "刚度(_F)...", n: "stiff" }, "-",
  { t: "光顺极点(_O)...", n: "smooth" }, "-",
  { t: "法向反向(_N)...", n: "normal" }, { t: "U 向/_V 向...", n: "uv" },
];

const MenuRows = ({ items, mr = 21 }) => items.map((it, i) => it === "-" ? <Sep key={i} /> : (
  <Row key={i} $on={it.on} $off={it.off}>
    <RowIcon $off={it.off}>{it.i || (it.n && <Ico n={it.n} s={18} />)}</RowIcon>
    <RowText><Lab t={it.t} /></RowText>
    {it.s && <Short $mr={mr}>{it.s}</Short>}
    {it.a && <ArrowBox $w={11}><Tri /></ArrowBox>}
  </Row>
));

const resIcons = ["ring", "hide", "show", "hand", "extrude", "curveL", "layers", "cubeSwap", "hand", "hand"];
const navIcons = [
  { y: 191, el: <Settings size={17} color="#333" strokeWidth={1.3} /> }, { y: 240, el: <Ico n="stack" s={26} /> },
  { y: 284, el: <Ico n="bow" s={27} /> }, { y: 326, el: <Ico n="bowl" s={26} /> },
  { y: 367, el: <Bell size={24} color="#555" strokeWidth={1} /> }, { y: 408, el: <Ico n="books" s={26} /> },
  { y: 452, el: <Ico n="bowlDim" s={27} /> }, { y: 493, el: <Ico n="boxLens" s={27} /> },
  { y: 549, el: <Ico n="info" s={26} /> }, { y: 601, el: <Ico n="browser" s={26} /> },
  { y: 654, el: <Clock size={24} color="#555" strokeWidth={1} /> }, { y: 697, el: <Ico n="chart" s={26} /> },
  { y: 740, el: <Ico n="tools" s={26} /> },
];
let navEnd = 178;
const navPlaced = navIcons.map((n) => { const mt = n.y - 15 - navEnd; navEnd = n.y + 15; return { ...n, mt }; });

const Triad = () => (
  <Overlay $l={915} $t={560} width="60" height="105" viewBox="915 560 60 105">
    <path d="M923 578 926 604 923 625 920 604Z" fill="#1f3fc4" />
    <path d="M928 628 950 619 968 616 952 624Z" fill="#3a9a3a" />
    <path d="M926 631 945 637 959 646 942 641Z" fill="#c23a3a" />
    <g fontFamily="Noto Sans, sans-serif" fontSize="13">
      <text x="928" y="576" fill="#4a5fc8">ZC</text>
      <text x="949" y="613" fill="#5a9a5a">YC</text>
      <text x="941" y="661" fill="#c25050">XC</text>
    </g>
  </Overlay>
);
const AbsTriad = () => (
  <Overlay $l={60} $t={650} width="120" height="150" viewBox="60 855 120 150">
    <g fill="none" stroke="#b5b7b9" strokeWidth="1">
      <path d="M77 924 110 914 137 926 104 936ZM77 924V963L104 975 137 964V926M104 936V975" />
    </g>
    <path d="M104 925V892H102L107 877 112 892H110V925Z" fill="#0f3fc0" />
    <path d="M138 937 152 931V928L168 930 155 941V937L139 942Z" fill="#3a9a3a" />
    <path d="M120 948 140 958 142 955 153 966 135 964 137 961 118 952Z" fill="#c82a2a" />
    <g fontFamily="Noto Sans, sans-serif" fontSize="11">
      <text x="103" y="872" fill="#4a5fc8">Z</text>
      <text x="155" y="973" fill="#d05050">X</text>
    </g>
  </Overlay>
);

const BigTip = () => (
  <Svg $s={50} viewBox="0 0 50 50">
    <path d="M1 24 24 3Q38 4 48 16L29 38Z" fill="url(#og)" stroke="#333" strokeWidth="1" strokeLinejoin="round" />
    <path d="M10 16Q22 20 32 32M18 9Q30 14 38 25M14 30 34 8M22 34 42 12" fill="none" stroke="#c46a10" strokeWidth=".8" />
    <path d="M21 44 35 29Q32 20 41 17L44 16 38 23 43 27 48 21Q49 30 39 32L26 47Q20 50 21 44Z" fill="#fff" stroke="#222" strokeWidth="1.3" strokeLinejoin="round" />
    <circle cx="24.5" cy="44.5" r="1.5" fill="#fff" stroke="#222" />
  </Svg>
);

export default function App() {
  return (
    <Page>
      <Global />
      <Defs>
        <defs>
          <linearGradient id="gl" x1="0" y1="0" x2="0" y2="1"><stop offset="0" stopColor="#f4f4f4" /><stop offset="1" stopColor="#c4c4c4" /></linearGradient>
          <linearGradient id="gr" x1="0" y1="0" x2="0" y2="1"><stop offset="0" stopColor="#bdbdbd" /><stop offset="1" stopColor="#868686" /></linearGradient>
          <linearGradient id="cy" x1="0" y1="0" x2="1" y2="0"><stop offset="0" stopColor="#f6f6f6" /><stop offset=".6" stopColor="#cfcfcf" /><stop offset="1" stopColor="#8e8e8e" /></linearGradient>
          <linearGradient id="og" x1="0" y1="0" x2="1" y2="1"><stop offset="0" stopColor="#f9a63e" /><stop offset="1" stopColor="#e57a10" /></linearGradient>
        </defs>
      </Defs>

      <TitleBar>
        <Logo>NX</Logo>
        <Placed items={titleItems} start={36} />
        <WinTitle>NX - 建模</WinTitle>
        <Placed start={1154} items={[
          { c: 1797, w: 62, el: <Siemens>SIEMENS</Siemens> },
          { c: 1858, w: 14, el: <Minus size={11} color="#fff" strokeWidth={2} /> },
          { c: 1884, w: 14, el: <Ico n="restore" s={13} /> },
          { c: 1906, w: 16, el: <X size={17} color="#fff" strokeWidth={1.6} /> },
        ]} />
      </TitleBar>

      <TabRow>
        <Tab $ml={3} $mr={10}>文件(F)</Tab>
        <Tab $on>主页</Tab>
        {tabs.map((t) => <Tab key={t} $ls={/[A-Za-z]/.test(t) ? 0.28 : 0}>{t}</Tab>)}
        <TabTools>
          <SearchBox><span>在此输入以搜索</span><Mirror><Search size={17} strokeWidth={1.2} /></Mirror></SearchBox>
          <Slot $w={16} $ml={4}>
            <Svg $s={16} viewBox="0 0 16 16"><path d="M1 5V1H5M11 1H15V5M15 11V15H11M5 15H1V11" fill="none" stroke="#fff" /></Svg>
          </Slot>
          <Slot $w={18} $ml={8}>
            <Svg $s={18} viewBox="0 0 18 18"><path d="M1 14 9 5 17 14" fill="none" stroke="#fff" strokeWidth="1.2" /></Svg>
          </Slot>
          <Slot $w={18} $ml={7}><CircleHelp size={17} color="#fff" strokeWidth={1.1} /></Slot>
          <Bang />
        </TabTools>
      </TabRow>

      <Ribbon>
        <Group $w={109}>
          <GroupBody $pl={12}>
            <BigBtn n="plane" t="基准平面" w={46} drop />
            <BigBtn n="sketch" t="草图" w={46} />
          </GroupBody>
          <GroupFoot><GroupName>构造</GroupName><CaretBox><Caret /></CaretBox></GroupFoot>
        </Group>
        <Group $w={529}>
          <GroupBody $pl={7}>
            <BigBtn n="extrude" t="拉伸" />
            <BigBtn n="revolve" t="旋转" />
            <BigBtn n="hole" t="孔" />
            <BigBtn n="unite" t="合并" />
            <BigBtn n="subtract" t="减去" />
            <BigBtn n="trim" t="修剪体" drop />
            <BigBtn n="blend" t="边倒圆" drop />
            <BigBtn n="chamfer" t="倒斜角" />
            <SmallCol $w={56} $ml={8}>
              <Small n="draft" t="拔模" w={28} s={25} />
              <Small n="shell" t="抽壳" w={28} s={26} />
            </SmallCol>
            <SmallCol $w={84}>
              <Small n="pattern" t="阵列特征" w={30} s={30} />
              <Small n="mirror" t="镜像特征" w={30} s={30} />
            </SmallCol>
            <BigBtn n="more" t="更多" drop />
          </GroupBody>
          <GroupFoot><GroupName>基本</GroupName><CaretBox><Caret /></CaretBox></GroupFoot>
        </Group>
        <Group $w={282}>
          <GroupBody $pl={6}>
            <BigBtn n="move" t="移动" />
            <BigBtn n="del" t="删除" />
            <BigBtn n="replace" t="替换" />
            <SmallCol $w={107} $ml={1}>
              <Small n="offset" t="偏置" w={33} s={26} />
              <Small n="resize" t="调整圆角大小" w={33} s={28} />
            </SmallCol>
            <BigBtn n="refresh" t="更多" drop s={34} />
          </GroupBody>
          <GroupFoot><GroupName>同步建模</GroupName><CaretBox><Caret /></CaretBox></GroupFoot>
        </Group>
        <EndCaret $t={82}><Caret /></EndCaret>
      </Ribbon>

      <Toolbar>
        <Placed items={toolItems} start={0} />
        <EndCaret $t={12}><Caret /></EndCaret>
      </Toolbar>

      <Work>
        <ViewCol>
          <TabStrip />
          <Viewport>
            <AbsTriad />
          </Viewport>
        </ViewCol>
        <ResBar>
          {resIcons.map((n, i) => <ResItem key={i}><Ico n={n} s={26} /></ResItem>)}
          <ResLine />
          <ResCaret />
        </ResBar>
        <NavBar>
          {navPlaced.map((n, i) => <NavItem key={i} $mt={n.mt}>{n.el}</NavItem>)}
        </NavBar>
      </Work>

      <Status>
        <StatusText>选择对象并使用 MB3，或者双击某一对象</StatusText>
        <Watermark>UG爱好者论坛@aqua</Watermark>
      </Status>

      <Triad />

      <Menu $l={8} $t={175} $w={150}>
        {mainItems.map((t, i) => (
          <Row key={i} $on={i === 1}>
            <RowIcon />
            <RowText><Lab t={t} /></RowText>
            <ArrowBox $w={8}><Tri /></ArrowBox>
          </Row>
        ))}
      </Menu>
      <Menu $l={158} $t={202} $w={210}><MenuRows items={editItems} /></Menu>
      <Menu $l={366} $t={540} $w={176}><MenuRows items={surfItems} /></Menu>
      <Tip><BigTip /><TipText>移除体中非预期的面不连续和裂口。</TipText></Tip>
    </Page>
  );
}
